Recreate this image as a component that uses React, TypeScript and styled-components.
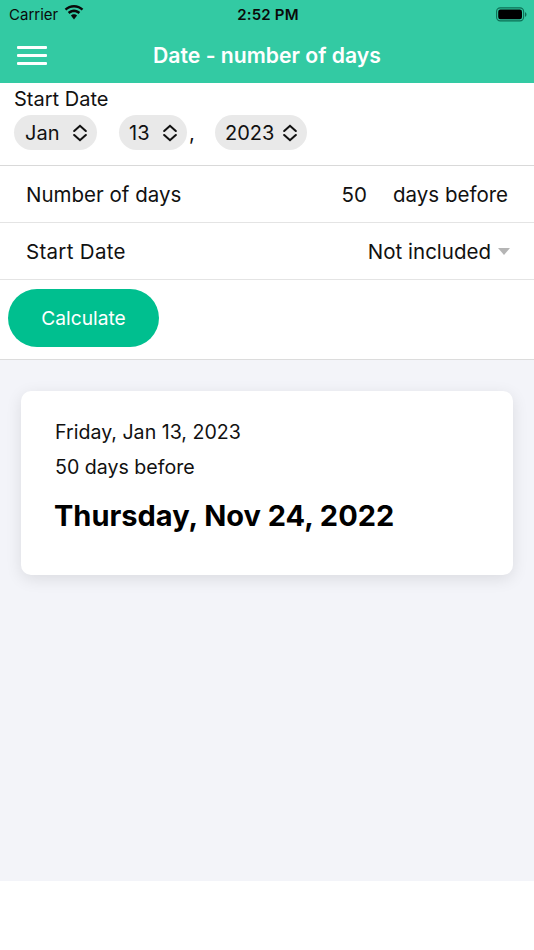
import React from 'react'
import styled, { createGlobalStyle } from 'styled-components'

const GlobalStyle = createGlobalStyle`
    html, body {
        margin: 0;
        padding: 0;
        background: #fff;
        font-family: Inter, "Liberation Sans", sans-serif;
        color: #111;
    }
`

const Wifi = () => (
    <svg width="20" height="15" viewBox="0 0 20 15">
        <path d="M10 2.600c3 0 5.700 1.100 7.700 3l1.600-1.800C16.800 1.300 13.500 0 10 0S3.200 1.300.7 3.800l1.600 1.800c2-1.900 4.700-3 7.700-3z" fill="#0a0a0a" />
        <path d="M10 7.200c1.700 0 3.300.6 4.500 1.700l1.700-1.900C14.500 5.400 12.300 4.500 10 4.500S5.500 5.400 3.800 7l1.700 1.900c1.200-1.100 2.800-1.700 4.500-1.700z" fill="#0a0a0a" />
        <path d="M10 9.200c-1.200 0-2.300.5-3.100 1.200L10 14.500l3.100-4.100c-.8-.7-1.900-1.200-3.100-1.200z" fill="#0a0a0a" />
    </svg>
)

const Battery = () => (
    <svg width="31" height="15" viewBox="0 0 31 15">
        <rect x="0.6" y="0.9" width="27" height="13" rx="3.6" fill="none" stroke="#0d6f55" strokeWidth="1.1" />
        <rect x="2.200" y="2.500" width="23.800" height="9.800" rx="2.200" fill="#000" />
        <path d="M29 5.200v4.600c.9-.3 1.500-1.200 1.500-2.300S29.900 5.500 29 5.200z" fill="#0d6f55" />
    </svg>
)

const Chevrons = () => (
    <svg width="14" height="18" viewBox="0 0 14 18" fill="none" stroke="#111" strokeWidth="2.100" strokeLinecap="round" strokeLinejoin="miter">
        <path d="M1.200 7 7 1.800 12.800 7" />
        <path d="M1.200 11 7 16.200 12.800 11" />
    </svg>
)

const App: React.FC<{}> = () => {
    return (
        <Page>
            <GlobalStyle />
            <Header>
                <StatusBar>
                    <CarrierGroup>Carrier <Wifi /></CarrierGroup>
                    <Clock>2:52 PM</Clock>
                    <BatteryGroup><Battery /></BatteryGroup>
                </StatusBar>
                <NavBar>
                    <Burger>
                        <BurgerLine />
                        <BurgerLine />
                        <BurgerLine />
                    </Burger>
                    <Title>Date - number of days</Title>
                </NavBar>
            </Header>

            <Form>
                <DateSection>
                    <DateLabel>Start Date</DateLabel>
                    <PickerRow>
                        <Picker $width={83}>Jan <Chevrons /></Picker>
                        <Picker $width={68} $left={22} $pad={10}>13 <Chevrons /></Picker>
                        <Comma>,</Comma>
                        <Picker $width={92} $left={19} $pad={10}>2023 <Chevrons /></Picker>
                    </PickerRow>
                </DateSection>
                <Row>
                    <span>Number of days</span>
                    <RowValue>
                        <DayCount>50</DayCount>
                        <span>days before</span>
                    </RowValue>
                </Row>
                <Row>
                    <RowLabel>Start Date</RowLabel>
                    <RowValue>
                        <span>Not included</span>
                        <Caret />
                    </RowValue>
                </Row>
                <ButtonBar>
                    <CalcButton>Calculate</CalcButton>
                </ButtonBar>
            </Form>

            <Result>
                <Card>
                    <CardLine>Friday, Jan 13, 2023</CardLine>
                    <CardLine>50 days before</CardLine>
                    <CardResult>Thursday, Nov 24, 2022</CardResult>
                </Card>
            </Result>
        </Page>
    )
}

const Page = styled.div`
    width: 534px;
    height: 950px;
    overflow: hidden;
    display: flex;
    flex-direction: column;
    background: #fff;
`

const Header = styled.div`
    height: 83px;
    background: #33caa3;
    display: flex;
    flex-direction: column;
`

const StatusBar = styled.div`
    height: 28px;
    padding: 0 7px 0 9px;
    display: grid;
    grid-template-columns: 1fr auto 1fr;
    align-items: center;
    font-size: 15px;
    color: #0a0a0a;
`

const CarrierGroup = styled.div`
    display: flex;
    align-items: center;
    gap: 6px;
    svg { margin-top: -3px; }
`

const Clock = styled.div`
    font-weight: 600;
    letter-spacing: 0.2px;
`

const BatteryGroup = styled.div`
    display: flex;
    justify-content: flex-end;
`

const NavBar = styled.div`
    flex: 1;
    display: grid;
    grid-template-columns: 1fr auto 1fr;
    align-items: center;
    padding-bottom: 1px;
`

const Burger = styled.div`
    width: 30px;
    margin-left: 17px;
    display: flex;
    flex-direction: column;
    gap: 5px;
`

const BurgerLine = styled.div`
    height: 3px;
    background: #fff;
    border-radius: 1px;
`

const Title = styled.div`
    font-size: 21.200px;
    font-weight: 600;
    color: #fff;
`

const Form = styled.div`
    display: flex;
    flex-direction: column;
    font-size: 20.500px;
    color: #111;
`

const DateSection = styled.div`
    height: 83px;
    padding: 4px 0 0 14px;
    box-sizing: border-box;
    border-bottom: 1px solid #d9d9d9;
`

const DateLabel = styled.div`
    font-size: 20px;
    line-height: 24px;
`

const PickerRow = styled.div`
    display: flex;
    align-items: center;
    margin-top: 4px;
`

const Picker = styled.div<{ $width: number; $left?: number; $pad?: number }>`
    width: ${p => p.$width}px;
    margin-left: ${p => p.$left ?? 0}px;
    height: 35px;
    box-sizing: border-box;
    padding: 0 10px 0 ${p => p.$pad ?? 11}px;
    border-radius: 18px;
    background: #e9e9e9;
    font-size: 20px;
    display: flex;
    align-items: center;
    justify-content: space-between;
`

const Comma = styled.span`
    width: 7px;
    margin-left: 2px;
`

const Row = styled.div`
    height: 57px;
    box-sizing: border-box;
    padding: 0 26px;
    border-bottom: 1px solid #e4e4e4;
    display: flex;
    align-items: center;
    justify-content: space-between;
`

const RowLabel = styled.span`
    letter-spacing: 0.3px;
`

const RowValue = styled.div`
    display: flex;
    align-items: center;
`

const DayCount = styled.span`
    margin-right: 26px;
`

const Caret = styled.span`
    width: 0;
    height: 0;
    margin-left: 7px;
    margin-right: -2px;
    border-left: 6.500px solid transparent;
    border-right: 6.500px solid transparent;
    border-top: 7px solid #b5b5b5;
`

const ButtonBar = styled.div`
    height: 80px;
    box-sizing: border-box;
    padding: 9px 8px 0;
    border-bottom: 1px solid #dcdcdc;
`

const CalcButton = styled.div`
    width: 151px;
    height: 58px;
    border-radius: 29px;
    background: #00bf8f;
    color: #fff;
    display: flex;
    align-items: center;
    justify-content: center;
    font-size: 19.200px;
`

const Result = styled.div`
    height: 521px;
    box-sizing: border-box;
    padding: 31px 21px 0;
    background: #f3f4f9;
`

const Card = styled.div`
    height: 184px;
    box-sizing: border-box;
    padding: 29px 34px;
    border-radius: 10px;
    background: #fff;
    box-shadow: 0 4px 16px rgba(0, 0, 0, 0.1);
    color: #111;
`

const CardLine = styled.div`
    font-size: 19.600px;
    line-height: 24px;
    margin-bottom: 12px;

    & + & {
        margin-top: -1px;
    }
`

const CardResult = styled.div`
    font-size: 29px;
    font-weight: 700;
    color: #000;
    margin-top: 19px;
    margin-left: -1px;
`

export default App
